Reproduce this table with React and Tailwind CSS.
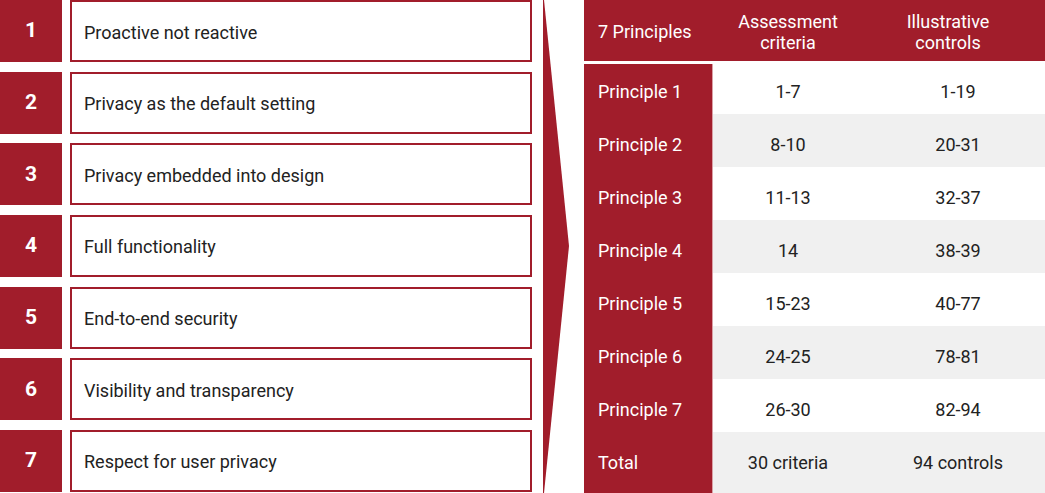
import React from "react";

const RED = "bg-[#a11d2b]";

const items = [
  "Proactive not reactive",
  "Privacy as the default setting",
  "Privacy embedded into design",
  "Full functionality",
  "End-to-end security",
  "Visibility and transparency",
  "Respect for user privacy",
];

const rows = [
  ["Principle 1", "1-7", "1-19"],
  ["Principle 2", "8-10", "20-31"],
  ["Principle 3", "11-13", "32-37"],
  ["Principle 4", "14", "38-39"],
  ["Principle 5", "15-23", "40-77"],
  ["Principle 6", "24-25", "78-81"],
  ["Principle 7", "26-30", "82-94"],
];

export default function App() {
  return (
    <div
      className="w-[1045px] h-[493px] bg-white flex overflow-hidden text-[#222]"
      style={{ fontFamily: "Roboto, 'Liberation Sans', sans-serif" }}
    >
      {/* Left list */}
      <div className="w-[532px] flex flex-col gap-[9.67px] shrink-0">
        {items.map((t, i) => (
          <div key={i} className="flex h-[62px] gap-[8px]">
            <div className={`w-[62px] ${RED} flex items-center justify-center text-white font-bold text-[21px]`}>
              {i + 1}
            </div>
            <div className="flex-1 border-2 border-[#a11d2b] flex items-center pl-[12px] pt-[2px] text-[18px]">
              {t}
            </div>
          </div>
        ))}
      </div>

      {/* Arrow */}
      <div className="ml-[11px] w-[27px] h-[493px] shrink-0">
        <svg width="27" height="493" viewBox="0 0 27 493">
          <polygon points="0,0 1,0 26,246 1,493 0,493" fill="#a11d2b" />
        </svg>
      </div>

      {/* Table */}
      <div className="ml-[14px] flex-1 flex flex-col">
        <div className={`h-[61px] ${RED} grid grid-cols-[129px_150px_1fr] items-center text-white text-[18px] leading-[21px] pt-[2px]`}>
          <div className="pl-[14px]">7 Principles</div>
          <div className="text-center">Assessment<br />criteria</div>
          <div className="text-center pr-3">Illustrative<br />controls</div>
        </div>
        <div className="h-[3px]" />
        {rows.map((r, i) => (
          <div
            key={i}
            className={`grid grid-cols-[129px_150px_1fr] text-[18px] ${i === 0 ? "h-[50px]" : "h-[53px]"} ${i % 2 === 1 ? "bg-[#f0f0f0]" : "bg-white"}`}
          >
            <div className={`${RED} border-r border-[#d9a0a6] text-white pl-[14px] flex items-center ${i === 0 ? "pt-[4px]" : "pt-[7px]"}`}>{r[0]}</div>
            <div className={`flex items-center justify-center ${i === 0 ? "pt-[4px]" : "pt-[7px]"}`}>{r[1]}</div>
            <div className={`flex items-center justify-center pl-2 ${i === 0 ? "pt-[4px]" : "pt-[7px]"}`}>{r[2]}</div>
          </div>
        ))}
        <div className="grid grid-cols-[129px_150px_1fr] text-[18px] h-[61px] bg-[#f0f0f0]">
          <div className={`${RED} border-r border-[#d9a0a6] text-white pl-[14px] flex items-center`}>Total</div>
          <div className="flex items-center justify-center">30 criteria</div>
          <div className="flex items-center justify-center pl-2">94 controls</div>
        </div>
      </div>
    </div>
  );
}
